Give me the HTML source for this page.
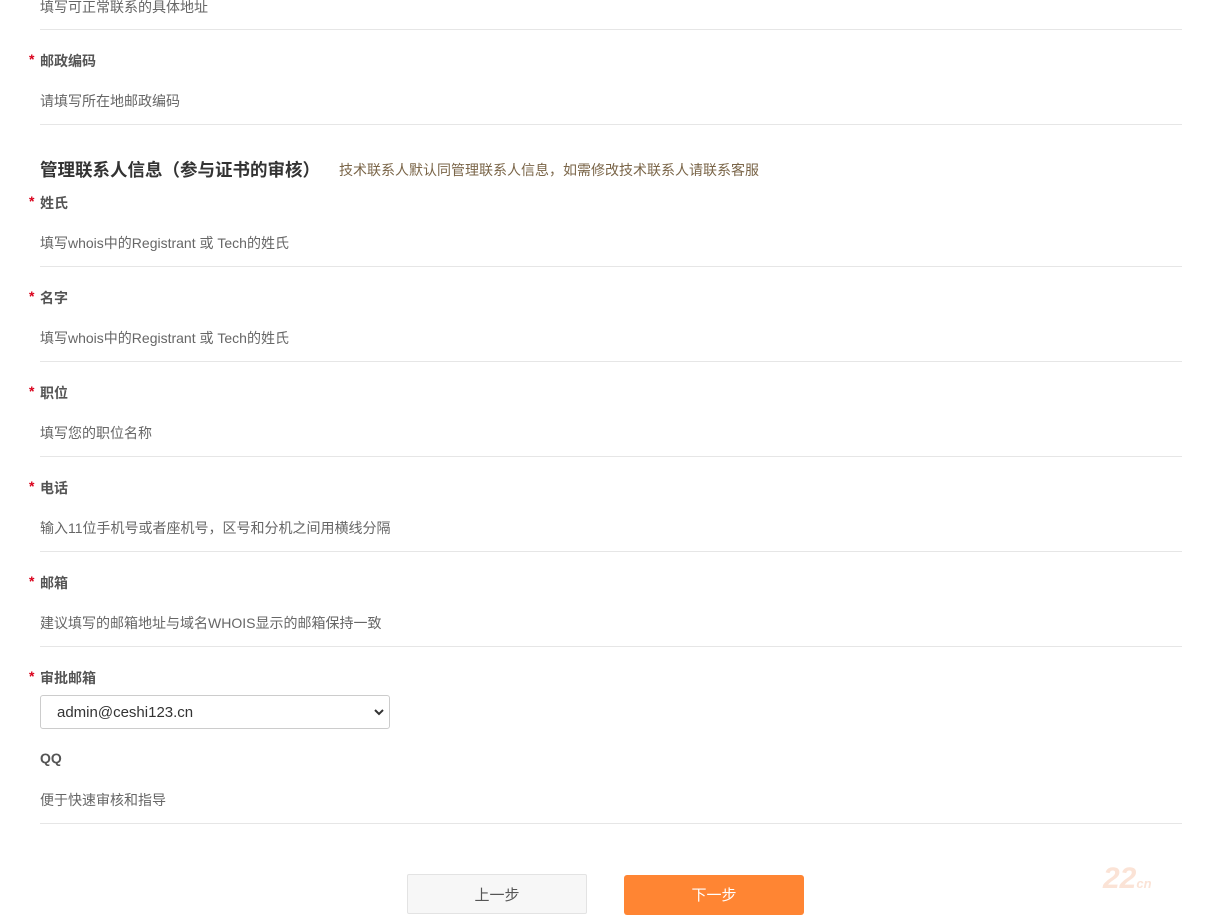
<!DOCTYPE html>
<html><head><meta charset="utf-8"><style>
body{margin:0;width:1210px;height:921px;background:#fff;position:relative;overflow:hidden;font-family:"Liberation Sans","Noto Sans CJK SC",sans-serif;}
.a{position:absolute;white-space:nowrap}
.l{font-size:14px;font-weight:bold;color:#555;left:40px}
.s{color:#d9001b;font-size:14px;left:29px;font-weight:bold}
.p{font-size:14px;color:#666;left:40px}
.h{position:absolute;left:40px;width:1142px;height:1px;background:#e6e6e6}
</style></head><body>
<div class="a p" style="top:-3px">填写可正常联系的具体地址</div>
<div class="h" style="top:29px"></div>
<div class="a s" style="top:51px">*</div><div class="a l" style="top:51px">邮政编码</div>
<div class="a p" style="top:91px">请填写所在地邮政编码</div>
<div class="h" style="top:124px"></div>
<div class="a" style="left:40px;top:157px;font-size:17.5px;font-weight:bold;color:#333">管理联系人信息（参与证书的审核）</div>
<div class="a" style="left:339px;top:160px;font-size:14px;color:#7a6548">技术联系人默认同管理联系人信息，如需修改技术联系人请联系客服</div>
<div class="a s" style="top:193px">*</div><div class="a l" style="top:193px">姓氏</div>
<div class="a p" style="top:233px">填写whois中的Registrant 或 Tech的姓氏</div>
<div class="h" style="top:266px"></div>
<div class="a s" style="top:288px">*</div><div class="a l" style="top:288px">名字</div>
<div class="a p" style="top:328px">填写whois中的Registrant 或 Tech的姓氏</div>
<div class="h" style="top:361px"></div>
<div class="a s" style="top:383px">*</div><div class="a l" style="top:383px">职位</div>
<div class="a p" style="top:423px">填写您的职位名称</div>
<div class="h" style="top:456px"></div>
<div class="a s" style="top:478px">*</div><div class="a l" style="top:478px">电话</div>
<div class="a p" style="top:518px">输入11位手机号或者座机号，区号和分机之间用横线分隔</div>
<div class="h" style="top:551px"></div>
<div class="a s" style="top:573px">*</div><div class="a l" style="top:573px">邮箱</div>
<div class="a p" style="top:613px">建议填写的邮箱地址与域名WHOIS显示的邮箱保持一致</div>
<div class="h" style="top:646px"></div>
<div class="a s" style="top:668px">*</div><div class="a l" style="top:668px">审批邮箱</div>
<div class="a" style="left:40px;top:695px;width:348px;height:32px;border:1px solid #ccc;border-radius:3px;font-size:15px;color:#333;line-height:34px;box-sizing:content-box"><span style="margin-left:16px">admin@ceshi123.cn</span>
<svg style="position:absolute;right:5px;top:12px" width="10" height="8" viewBox="0 0 10 8"><path d="M1 2l4 4 4-4" stroke="#333" stroke-width="2" fill="none"/></svg></div>
<div class="a l" style="top:750px">QQ</div>
<div class="a p" style="top:790px">便于快速审核和指导</div>
<div class="h" style="top:823px"></div>
<div class="a" style="left:407px;top:874px;width:178px;height:38px;border:1px solid #e3e3e3;border-radius:2px;background:#f7f7f7;text-align:center;line-height:42px;font-size:15px;color:#555">上一步</div>
<div class="a" style="left:624px;top:875px;width:180px;height:40px;border-radius:3px;background:#ff8533;text-align:center;line-height:42px;font-size:15px;color:#fff">下一步</div>
<div class="a" style="left:1103px;top:862px;font-size:30px;font-weight:bold;font-style:italic;color:#fbe3d6">22<span style="font-size:13px">cn</span></div>
</body></html>
